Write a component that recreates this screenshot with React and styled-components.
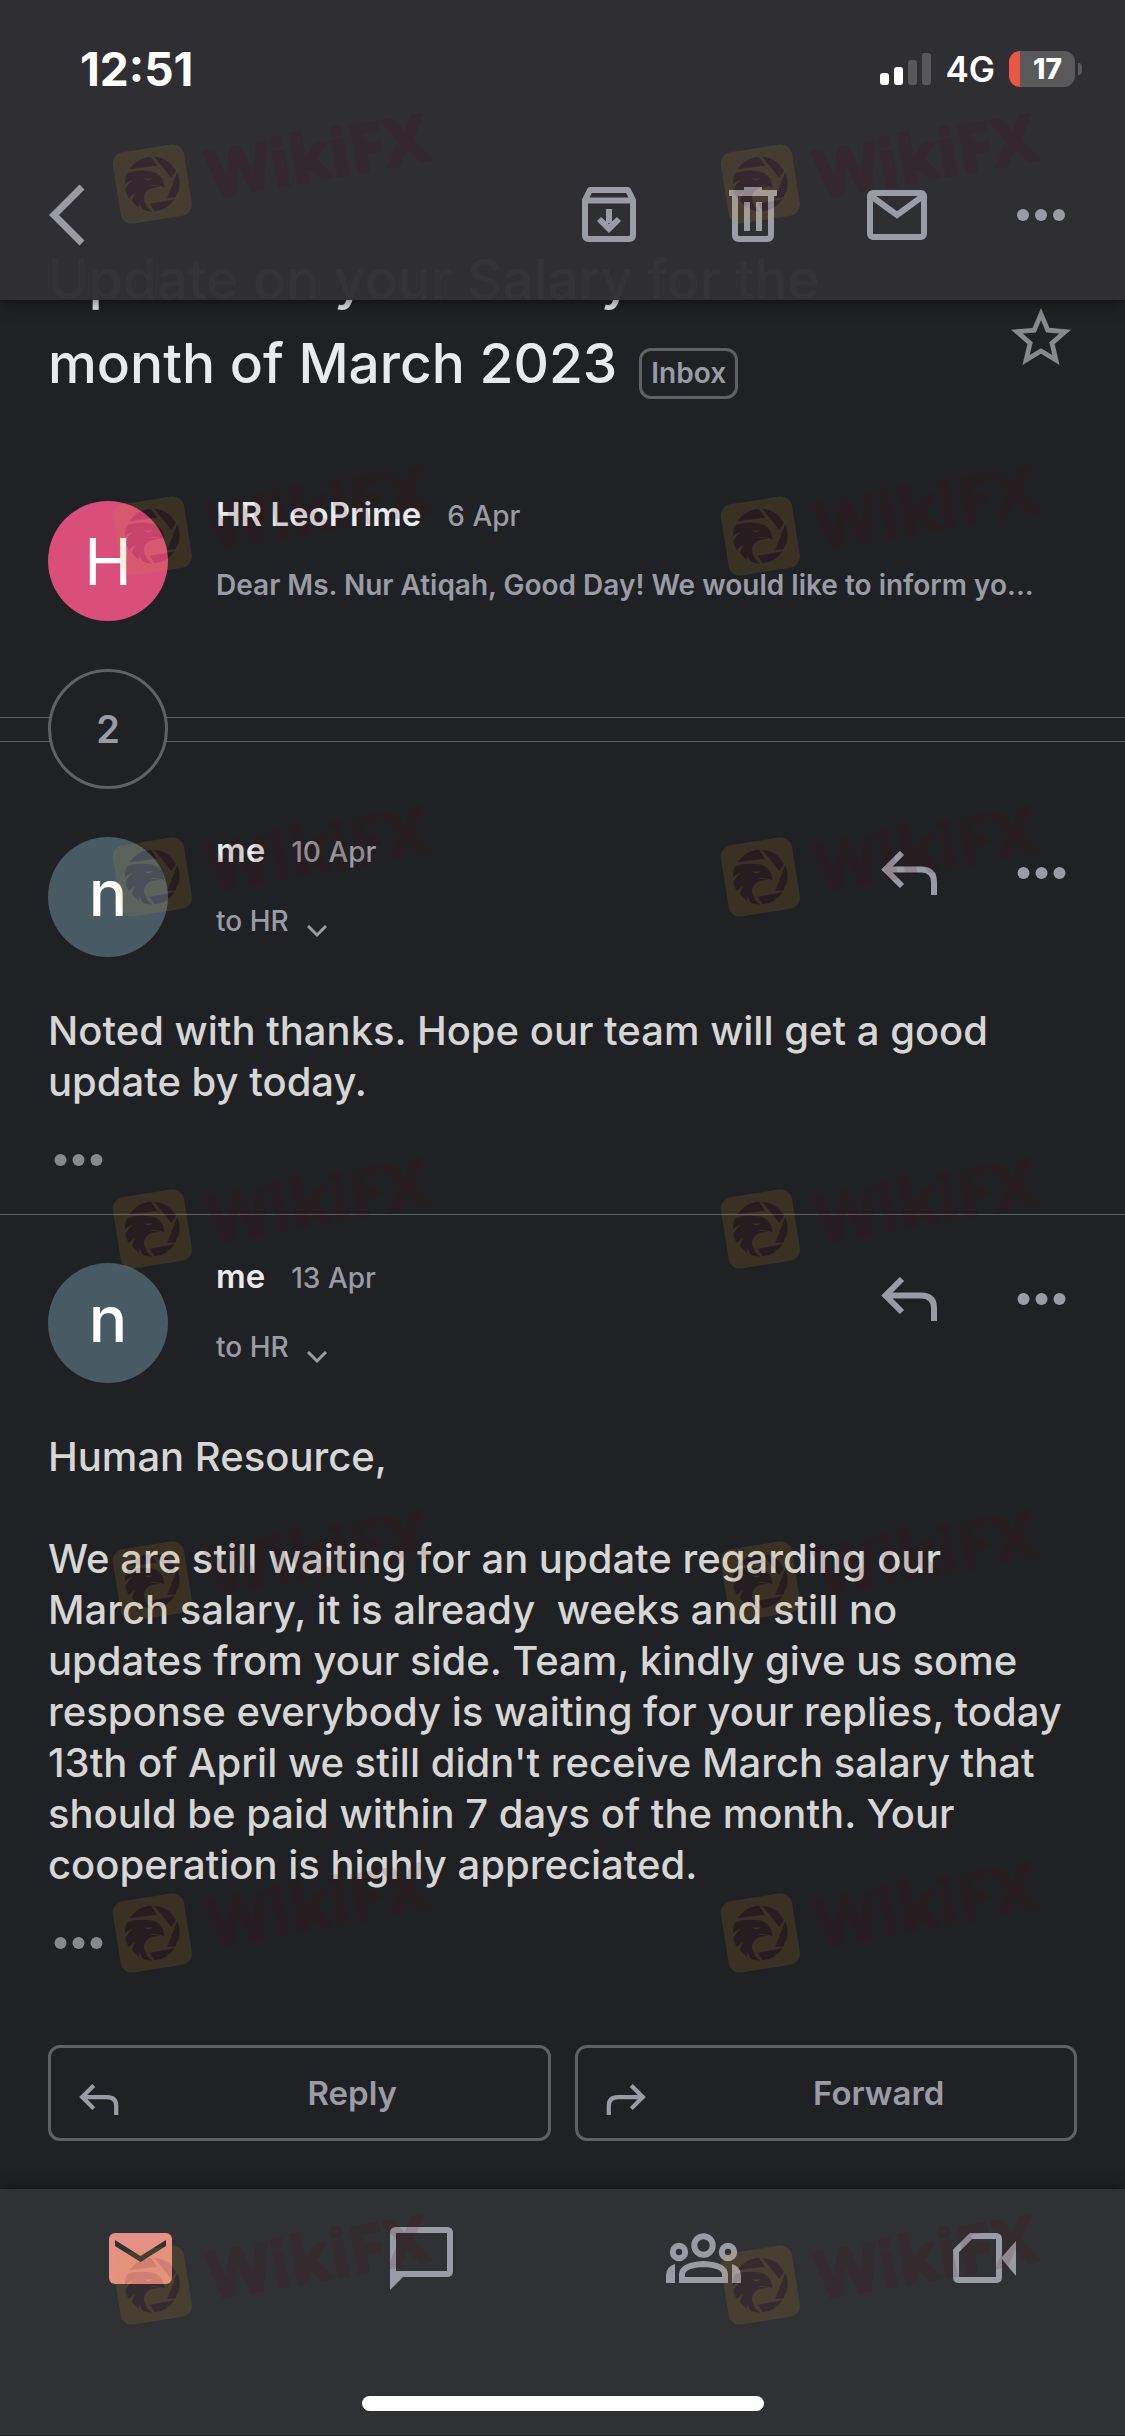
import styled, { createGlobalStyle } from 'styled-components';

const GlobalStyle = createGlobalStyle`
  * {
    box-sizing: border-box;
  }

  body {
    margin: 0;
    background-color: #202124;
    font-family: Inter, 'Liberation Sans', sans-serif;
  }

  button {
    padding: 0;
    border: none;
    background: none;
    color: inherit;
    font: inherit;
    cursor: pointer;
  }

  svg {
    display: block;
  }
`;

const Screen = styled.div`
  position: relative;
  overflow: hidden;
  background-color: #202124;
  color: #9a9ca5;
`;

const Header = styled.header`
  position: sticky;
  top: 0;
  z-index: 1;
  background-color: rgba(48, 47, 52, 0.98);
  box-shadow: 0 2px 14px rgba(0, 0, 0, 0.55);
`;

const StatusBar = styled.div`
  display: flex;
  justify-content: space-between;
  align-items: center;
  height: 138px;
  padding: 0 43px 0 80px;
  color: #fff;
`;

const Time = styled.time`
  font-size: 46px;
  font-weight: 700;
`;

const StatusIcons = styled.div`
  display: flex;
  align-items: center;
  gap: 14px;
`;

const Network = styled.span`
  font-size: 35px;
  font-weight: 600;
`;

const Battery = styled.div`
  display: flex;
  align-items: center;
  gap: 3px;
`;

const BatteryBody = styled.div`
  width: 66px;
  height: 36px;
  border-radius: 11px;
  padding-left: 11px;
  background: linear-gradient(to right, #ea5545 11px, #59595b 11px);
  font-size: 28px;
  font-weight: 800;
  line-height: 36px;
  text-align: center;
`;

const BatteryTip = styled.div`
  width: 4px;
  height: 12px;
  border-radius: 0 4px 4px 0;
  background-color: #59595b;
`;

const Toolbar = styled.div`
  display: flex;
  justify-content: space-between;
  align-items: center;
  height: 162px;
  padding: 0 48px 8px;
`;

const ToolbarActions = styled.div`
  display: flex;
  gap: 72px;
`;

const Subject = styled.div`
  display: flex;
  justify-content: space-between;
  align-items: center;
  margin-top: -63px;
  padding: 0 48px;
`;

const Title = styled.h1`
  margin: 0;
  color: #e8eaed;
  font-size: 55px;
  font-weight: 500;
  line-height: 84px;
`;

const Tag = styled.span`
  display: inline-block;
  height: 51px;
  margin-left: 22px;
  padding: 0 9px;
  border: 3px solid #5f6165;
  border-radius: 12px;
  color: #9a9ca5;
  font-size: 28px;
  font-weight: 600;
  line-height: 45px;
  vertical-align: baseline;
`;

const StarButton = styled.button`
  color: #86898d;
  margin-top: 34px;
`;

const Message = styled.article`
  padding: 48px 48px 47px;
  border-top: ${props => (props.$divider ? '1px solid #5f6165' : 'none')};
`;

const CollapsedMessage = styled(Message)`
  padding: 96px 48px 48px;
`;

const MessageHeader = styled.div`
  display: flex;
  align-items: flex-start;
`;

const Avatar = styled.div`
  flex: none;
  width: 120px;
  height: 120px;
  margin-right: 48px;
  border-radius: 50%;
  background-color: ${props => props.$color};
  color: #fff;
  font-size: 64px;
  line-height: ${props => (props.$lower ? '112px' : '122px')};
  font-weight: ${props => (props.$lower ? 500 : 400)};
  text-align: center;
`;

const Sender = styled.div`
  flex: 1;
  min-width: 0;
`;

const NameLine = styled.div`
  display: flex;
  align-items: baseline;
  gap: 26px;
  line-height: 26px;
`;

const Name = styled.span`
  color: #e8eaed;
  font-size: 33px;
  font-weight: 600;
`;

const SentDate = styled.span`
  font-size: 28px;
  font-weight: 500;
`;

const Snippet = styled.p`
  margin: 38px 0 0;
  font-size: 28px;
  font-weight: 600;
  line-height: 36px;
  white-space: nowrap;
`;

const Recipient = styled.button`
  display: flex;
  align-items: flex-end;
  gap: 18px;
  margin-top: 38px;
  font-size: 28px;
  font-weight: 500;
  line-height: 36px;

  svg {
    margin-bottom: 1px;
  }
`;

const MessageActions = styled.div`
  display: flex;
  align-items: center;
  gap: 78px;
  margin: 14px 10px 0 0;
`;

const Body = styled.p`
  margin: 48px 0 46px;
  color: #d6d6d6;
  font-size: 40px;
  font-weight: 500;
  line-height: 51px;
  white-space: pre-wrap;
`;

const QuotedToggle = styled.button`
  display: block;
  margin-left: 5px;
  color: #86898d;
`;

const HiddenRow = styled.div`
  display: grid;
  align-items: center;

  > * {
    grid-area: 1 / 1;
  }
`;

const HiddenLines = styled.div`
  height: 25px;
  border: 1px solid #5f6165;
  border-width: 1px 0;
`;

const HiddenCount = styled.button`
  width: 120px;
  height: 120px;
  margin-left: 48px;
  border: 3px solid #5f6165;
  border-radius: 50%;
  background-color: #202124;
  font-size: 38px;
  font-weight: 600;
`;

const ReplyBar = styled.div`
  display: grid;
  grid-template-columns: 1fr 1fr;
  gap: 24px;
  padding: 48px;
`;

const ReplyButton = styled.button`
  display: flex;
  align-items: center;
  height: 96px;
  padding: 0 0 0 28px;
  border: 3px solid #5f6165;
  border-radius: 12px;
  font-size: 33px;
  font-weight: 600;

  svg {
    margin-top: 12px;
  }

  span {
    flex: 1;
    margin-left: 38px;
    text-align: center;
  }
`;

const BottomNav = styled.nav`
  padding-bottom: 24px;
  background-color: #303134;
  box-shadow: 0 -2px 14px rgba(0, 0, 0, 0.4);
`;

const NavItems = styled.div`
  display: grid;
  grid-template-columns: repeat(4, 1fr);
  padding: 32px 0 100px;
`;

const NavButton = styled.button`
  display: flex;
  justify-content: center;
  color: ${props => (props.$active ? '#e69186' : '#9a9ca5')};
`;

const HomeIndicator = styled.div`
  position: relative;
  z-index: 3;
  width: 402px;
  height: 15px;
  margin: 0 auto;
  border-radius: 8px;
  background-color: #fff;
`;

const WatermarkLayer = styled.div`
  position: absolute;
  inset: 0;
  z-index: 2;
  display: grid;
  grid-template-columns: 608px 608px;
  grid-template-rows: 352px 341px repeat(5, 352px);
  padding: 85px 0 0 100px;
  overflow: hidden;
  pointer-events: none;
`;

const MarkText = styled.text`
  font-family: 'Open Sans', sans-serif;
  font-size: 196px;
  font-weight: 700;
`;

const Watermark = () => (
  <svg width="400" height="165" viewBox="0 -135 1200 495" opacity="0.13">
    <rect x="49" y="54" width="216" height="216" rx="34" fill="#d8a028" transform="rotate(-9 157 162)" />
    <g fill="#4b080a">
      <path d="M88 118A82 82 0 0 1 152 80L171 107Z" />
      <path d="M163 80A82 82 0 0 1 228 122L214 144Z" />
      <path d="M232 126A82 82 0 0 1 226 202L201 205Z" />
      <path d="M224 208A82 82 0 0 1 164 244L149 221Z" />
      <path d="M82 130C100 120 128 121 150 124C176 128 193 143 193 174C188 167 181 166 174 170C166 173 158 172 150 176C134 184 128 199 135 217C140 231 148 238 157 244C147 245 136 242 127 238L117 220L117 233C108 228 100 220 96 211L104 190C94 196 88 203 86 204C81 196 77 186 76 178C84 163 91 156 99 150C90 151 82 157 75 163C74 151 77 139 82 130Z" />
    </g>
    <path d="M131 145Q143 147 157 144Q147 156 136 148ZM147 168Q163 162 178 167Q163 167 147 168Z" fill="#d8a028" />
    <MarkText
      x="336"
      y="205"
      transform="rotate(-10 336 205)"
      fill="#4b080a"
      stroke="#4b080a"
      strokeWidth="8"
      strokeLinejoin="round"
    >
      WikiFX
    </MarkText>
  </svg>
);

const SignalIcon = () => (
  <svg width="51" height="32" viewBox="0 0 51 32">
    <rect x="0" y="20" width="9" height="12" rx="3" fill="#fff" />
    <rect x="14" y="14" width="9" height="18" rx="3" fill="#fff" />
    <rect x="28" y="7" width="9" height="25" rx="3" fill="#59595b" />
    <rect x="42" y="0" width="9" height="32" rx="3" fill="#59595b" />
  </svg>
);

const BackIcon = () => (
  <svg width="38" height="62" viewBox="0 0 38 62" fill="none" stroke="currentColor" strokeWidth="7">
    <path d="M34 3L6 31L34 59" />
  </svg>
);

const ArchiveIcon = () => (
  <svg width="72" height="72" viewBox="0 0 72 72" fill="none" stroke="currentColor">
    <path d="M12 21L17 11H55L60 21V56Q60 60 56 60H16Q12 60 12 56Z" strokeWidth="6" strokeLinejoin="round" />
    <path d="M13 21.500H59" strokeWidth="6" />
    <path d="M36 30V44" strokeWidth="6" />
    <path d="M24 42L28 38L36 45L44 38L48 42L36 54Z" fill="currentColor" stroke="none" />
  </svg>
);

const TrashIcon = () => (
  <svg width="72" height="72" viewBox="0 0 72 72" fill="none" stroke="currentColor" strokeWidth="6">
    <path d="M18 14V56Q18 60 22 60H50Q54 60 54 56V14" />
    <path d="M12 14H60M27 11H45M30 23V52M42 23V52" />
  </svg>
);

const MailIcon = () => (
  <svg width="72" height="72" viewBox="0 0 72 72" fill="none" stroke="currentColor" strokeWidth="6">
    <rect x="9" y="14" width="54" height="44" rx="3" />
    <path d="M10 17L36 36L62 17" />
  </svg>
);

const DotsIcon = ({ width = 51 }) => (
  <svg width={width} height="14" viewBox={`0 0 ${width} 14`} fill="currentColor">
    <circle cx={width / 2 - 18} cy="7" r="6" />
    <circle cx={width / 2} cy="7" r="6" />
    <circle cx={width / 2 + 18} cy="7" r="6" />
  </svg>
);

const StarIcon = () => (
  <svg width="72" height="72" viewBox="0 0 24 24" fill="currentColor">
    <path d="M22 9.240l-7.190-.62L12 2 9.190 8.630 2 9.240l5.460 4.730L5.820 21 12 17.270 18.180 21l-1.630-7.030L22 9.240zM12 15.400l-3.760 2.270 1-4.280-3.320-2.880 4.380-.38L12 6.100l1.710 4.040 4.380.38-3.320 2.880 1 4.280L12 15.400z" />
  </svg>
);

const ReplyIcon = ({ width = 57, height = 44, flip }) => (
  <svg width={width} height={height} viewBox="0 0 57 44" fill="none" stroke="currentColor" strokeWidth="6">
    <path
      d="M21 2L4.500 18.500L21 35M5 18.500H40Q53 18.500 53 31V44"
      transform={flip ? 'matrix(-1 0 0 1 57 0)' : undefined}
    />
  </svg>
);

const ChevronDown = () => (
  <svg width="20" height="13" viewBox="0 0 20 13" fill="none" stroke="currentColor" strokeWidth="3">
    <path d="M1 1L10 10L19 1" />
  </svg>
);

const MailFilledIcon = () => (
  <svg width="75" height="75" viewBox="0 0 75 75">
    <rect x="6" y="12" width="63" height="51" rx="6" fill="currentColor" />
    <path d="M12 19L37.500 35L63 19V25L37.500 41L12 25Z" fill="#303134" />
  </svg>
);

const ChatIcon = () => (
  <svg width="75" height="75" viewBox="0 0 75 75" fill="currentColor">
    <path
      fillRule="evenodd"
      d="M12 6H63Q69 6 69 12V50Q69 56 63 56H19L6 69V12Q6 6 12 6ZM12 12V50H63V12Z"
    />
  </svg>
);

const GroupsIcon = () => (
  <svg width="75" height="75" viewBox="0 0 75 75" fill="none" stroke="currentColor">
    <circle cx="37.500" cy="24.500" r="9.200" strokeWidth="6" />
    <circle cx="13" cy="31" r="6.200" strokeWidth="6" />
    <circle cx="62" cy="31" r="6.200" strokeWidth="6" />
    <path d="M16 59V53Q17 44 37.500 43Q58 44 59 53V59Z" strokeWidth="6" />
    <path d="M9 43V62H0V54Q0 46 9 43ZM66 43V62H75V54Q75 46 66 43Z" fill="currentColor" stroke="none" />
  </svg>
);

const VideoIcon = () => (
  <svg width="75" height="75" viewBox="0 0 75 75" fill="none" stroke="currentColor" strokeWidth="6">
    <path d="M24 15H49Q52 15 52 18V56Q52 59 49 59H12Q9 59 9 56V30Z" />
    <path d="M54 37L69 20V55Z" fill="currentColor" stroke="none" />
  </svg>
);

const messages = [
  {
    id: 1,
    date: '10 Apr',
    text: 'Noted with thanks. Hope our team will get a good\nupdate by today.',
  },
  {
    id: 2,
    date: '13 Apr',
    text: `Human Resource,

We are still waiting for an update regarding our
March salary, it is already  weeks and still no
updates from your side. Team, kindly give us some
response everybody is waiting for your replies, today
13th of April we still didn't receive March salary that
should be paid within 7 days of the month. Your
cooperation is highly appreciated.`,
  },
];

const ThreadMessage = ({ message, divider }) => (
  <Message $divider={divider}>
    <MessageHeader>
      <Avatar $color="#485a64" $lower>n</Avatar>
      <Sender>
        <NameLine>
          <Name>me</Name>
          <SentDate>{message.date}</SentDate>
        </NameLine>
        <Recipient type="button">
          to HR
          <ChevronDown />
        </Recipient>
      </Sender>
      <MessageActions>
        <button type="button" aria-label="Reply"><ReplyIcon /></button>
        <button type="button" aria-label="More"><DotsIcon /></button>
      </MessageActions>
    </MessageHeader>
    <Body>{message.text}</Body>
    <QuotedToggle type="button" aria-label="Show quoted text"><DotsIcon /></QuotedToggle>
  </Message>
);

const App = () => {
  return (
    <Screen>
      <GlobalStyle />
      <Header>
        <StatusBar>
          <Time>12:51</Time>
          <StatusIcons>
            <SignalIcon />
            <Network>4G</Network>
            <Battery>
              <BatteryBody>17</BatteryBody>
              <BatteryTip />
            </Battery>
          </StatusIcons>
        </StatusBar>
        <Toolbar>
          <button type="button" aria-label="Back"><BackIcon /></button>
          <ToolbarActions>
            <button type="button" aria-label="Archive"><ArchiveIcon /></button>
            <button type="button" aria-label="Delete"><TrashIcon /></button>
            <button type="button" aria-label="Mark unread"><MailIcon /></button>
            <button type="button" aria-label="More"><DotsIcon width={72} /></button>
          </ToolbarActions>
        </Toolbar>
      </Header>

      <main>
        <Subject>
          <Title>
            Update on your Salary for the
            <br />
            month of March 2023
            <Tag>Inbox</Tag>
          </Title>
          <StarButton type="button" aria-label="Star"><StarIcon /></StarButton>
        </Subject>

        <CollapsedMessage>
          <MessageHeader>
            <Avatar $color="#d94e7b">H</Avatar>
            <Sender>
              <NameLine>
                <Name>HR LeoPrime</Name>
                <SentDate>6 Apr</SentDate>
              </NameLine>
              <Snippet>Dear Ms. Nur Atiqah, Good Day! We would like to inform yo...</Snippet>
            </Sender>
          </MessageHeader>
        </CollapsedMessage>

        <HiddenRow>
          <HiddenLines />
          <HiddenCount type="button" aria-label="Show 2 more messages">2</HiddenCount>
        </HiddenRow>

        {messages.map((message, index) => (
          <ThreadMessage key={message.id} message={message} divider={index > 0} />
        ))}

        <ReplyBar>
          <ReplyButton type="button">
            <ReplyIcon width={40} height={31} />
            <span>Reply</span>
          </ReplyButton>
          <ReplyButton type="button">
            <ReplyIcon width={40} height={31} flip />
            <span>Forward</span>
          </ReplyButton>
        </ReplyBar>
      </main>

      <BottomNav>
        <NavItems>
          <NavButton type="button" aria-label="Mail" $active><MailFilledIcon /></NavButton>
          <NavButton type="button" aria-label="Chat"><ChatIcon /></NavButton>
          <NavButton type="button" aria-label="Spaces"><GroupsIcon /></NavButton>
          <NavButton type="button" aria-label="Meet"><VideoIcon /></NavButton>
        </NavItems>
        <HomeIndicator />
      </BottomNav>

      <WatermarkLayer aria-hidden="true">
        {Array.from({ length: 14 }, (_, index) => (
          <Watermark key={index} />
        ))}
      </WatermarkLayer>
    </Screen>
  );
};

export default App;
